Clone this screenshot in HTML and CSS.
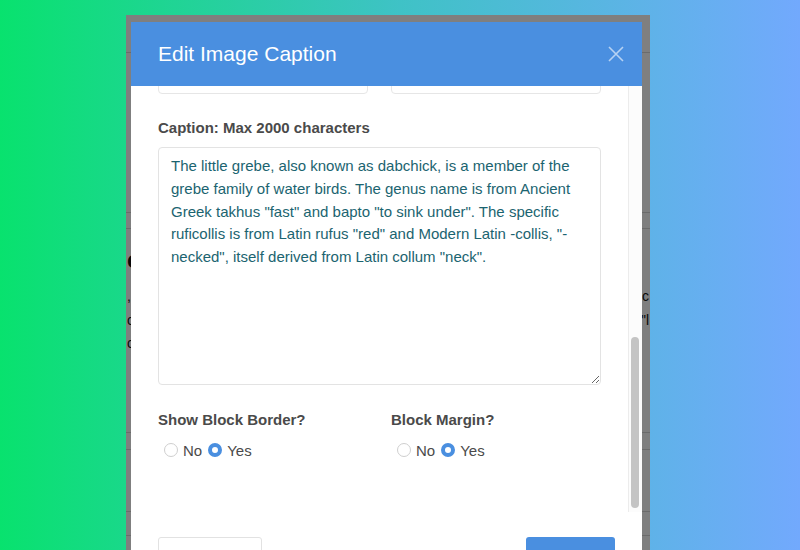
FILE: index.html
```html
<!DOCTYPE html>
<html>
<head>
<meta charset="utf-8">
<link rel="stylesheet" href="styles.css">
</head>
<body>
<div class="panel">
  <div class="page">
    <div class="rule r1"></div>
    <div class="rule r2"></div>
    <div class="rule r3"></div>
    <div class="heading">e</div>
    <div class="pline"><span>,</span><span>c</span></div>
    <div class="pline"><span>c</span><span>"l</span></div>
    <div class="pline"><span>c</span><span></span></div>
    <div class="rule r4"></div>
    <div class="rule r5"></div>
    <div class="rule r6"></div>
    <div class="rule r7"></div>
  </div>
  <div class="backdrop"></div>
  <div class="modal">
    <div class="modal-header">
      <h1 class="modal-title">Edit Image Caption</h1>
      <svg class="close" width="16" height="16" viewBox="0 0 16 16"><path d="M1 1L15 15M15 1L1 15" stroke="currentColor" stroke-width="1.6" fill="none"/></svg>
    </div>
    <div class="modal-body">
      <div class="body-content">
        <div class="two-col inputs">
          <div class="input-box"></div>
          <div class="input-box"></div>
        </div>
        <label class="field-label caption-label">Caption: Max 2000 characters</label>
        <textarea class="caption">The little grebe, also known as dabchick, is a member of the grebe family of water birds. The genus name is from Ancient Greek takhus "fast" and bapto "to sink under". The specific ruficollis is from Latin rufus "red" and Modern Latin -collis, "-necked", itself derived from Latin collum "neck".</textarea>
        <div class="two-col options">
          <div class="option">
            <div class="field-label">Show Block Border?</div>
            <div class="radios">
              <span class="radio"></span><span class="rlabel">No</span>
              <span class="radio checked"></span><span class="rlabel">Yes</span>
            </div>
          </div>
          <div class="option">
            <div class="field-label">Block Margin?</div>
            <div class="radios">
              <span class="radio"></span><span class="rlabel">No</span>
              <span class="radio checked"></span><span class="rlabel">Yes</span>
            </div>
          </div>
        </div>
      </div>
      <div class="scroll-track"><div class="scroll-thumb"></div></div>
    </div>
    <div class="modal-footer">
      <div class="btn btn-cancel"></div>
      <div class="btn btn-save"></div>
    </div>
  </div>
</div>
</body>
</html>
```
FILE: styles.css
```css
* { box-sizing: border-box; }
html, body { margin: 0; padding: 0; }
body {
  width: 800px;
  height: 550px;
  overflow: hidden;
  background: linear-gradient(90deg, #08e26e 0%, #3fc2c6 50%, #72a9fd 100%);
  font-family: "Liberation Sans", Arial, sans-serif;
  padding: 15px 0 0 126px;
}
.panel {
  position: relative;
  width: 524px;
  height: 535px;
  overflow: hidden;
  background: #fff;
}
.page {
  display: flex;
  flex-direction: column;
  color: #111;
  font-size: 14px;
}
.rule { height: 1px; background: #d6d6d6; }
.r1 { margin-top: 37px; }
.r2 { margin-top: 159px; }
.r3 { margin-top: 15px; }
.heading {
  margin-top: 16px;
  padding-left: 1px;
  font-size: 24px;
  font-weight: bold;
  line-height: 30px;
}
.pline {
  display: flex;
  justify-content: space-between;
  height: 23.5px;
  line-height: 23.5px;
  padding: 0 1px;
}
.heading + .pline { margin-top: 10px; }
.r4 { margin-top: 76px; }
.r5 { margin-top: 16px; }
.r6 { margin-top: 61px; }
.r7 { margin-top: 23px; }
.backdrop {
  position: absolute;
  inset: 0;
  background: rgba(0, 0, 0, 0.5);
}
.modal {
  position: absolute;
  top: 7px;
  left: 5px;
  width: 511px;
  height: 560px;
  background: #fff;
  display: flex;
  flex-direction: column;
}
.modal-header {
  height: 64px;
  flex: none;
  background: #4a8fe0;
  display: flex;
  align-items: center;
  justify-content: space-between;
  padding: 0 18px 0 27px;
}
.modal-title {
  margin: 0;
  font-size: 21px;
  font-weight: normal;
  color: #fff;
}
.close { color: rgba(255, 255, 255, 0.6); margin-top: -1px; }
.modal-body {
  height: 426px;
  flex: none;
  display: flex;
  overflow: hidden;
}
.body-content {
  flex: 1;
  padding: 0 27px;
  display: flex;
  flex-direction: column;
}
.two-col {
  display: grid;
  grid-template-columns: 210px 210px;
  column-gap: 23px;
}
.input-box {
  height: 38px;
  margin-top: -30px;
  border: 1px solid #e6e6e6;
  border-radius: 4px;
}
.field-label {
  display: block;
  font-size: 15px;
  font-weight: bold;
  color: #4a4a4a;
  line-height: 20px;
}
.caption-label { margin-top: 24px; }
.caption {
  margin-top: 9px;
  height: 238px;
  width: 443px;
  border: 1px solid #e3e3e3;
  border-radius: 4px;
  padding: 7px 12px;
  font-family: "Liberation Sans", Arial, sans-serif;
  font-size: 15px;
  line-height: 22.75px;
  color: #1b6470;
  resize: vertical;
  outline: none;
  overflow: hidden;
}
.options { margin-top: 25px; }
.radios {
  display: flex;
  align-items: center;
  margin-top: 10px;
  height: 20px;
  font-size: 15px;
  color: #4a4a4a;
}
.radio {
  width: 14px;
  height: 14px;
  border-radius: 50%;
  border: 1px solid #cfcfcf;
  background: #fff;
  margin-left: 6px;
  flex: none;
}
.radio.checked {
  border: 4px solid #4a8fe0;
}
.rlabel { margin-left: 5px; }
.scroll-track {
  width: 14px;
  flex: none;
  border-left: 1px solid #ececec;
  background: #fcfcfc;
  padding: 251px 0 0 2px;
}
.scroll-thumb {
  width: 8px;
  height: 171px;
  border-radius: 4px;
  background: #c4c4c4;
}
.modal-footer {
  display: flex;
  justify-content: space-between;
  padding: 25px 27px 0 27px;
}
.btn {
  height: 40px;
  border-radius: 3px;
}
.btn-cancel {
  width: 104px;
  background: #fff;
  border: 1px solid #e2e2e2;
}
.btn-save {
  width: 89px;
  background: #4a8fe0;
}
```
